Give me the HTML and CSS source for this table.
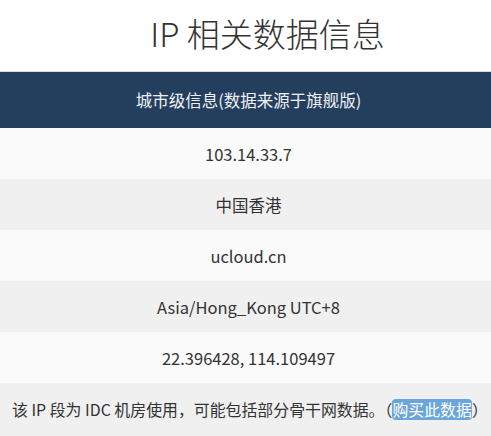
FILE: index.html
```html
<!DOCTYPE html>
<html lang="zh-CN">
<head>
<meta charset="utf-8">
<title>IP 相关数据信息</title>
<link rel="stylesheet" href="styles.css">
</head>
<body>
<div class="page">
  <h1 class="title">IP 相关数据信息</h1>
  <div class="info">
    <div class="row head">城市级信息(数据来源于旗舰版)</div>
    <div class="row odd">103.14.33.7</div>
    <div class="row even">中国香港</div>
    <div class="row odd">ucloud.cn</div>
    <div class="row even">Asia/Hong_Kong UTC+8</div>
    <div class="row odd">22.396428, 114.109497</div>
    <div class="row even note">该 IP 段为 IDC 机房使用，可能包括部分骨干网数据。（<a class="buy" href="#">购买此数据</a>）</div>
  </div>
</div>
</body>
</html>
```

FILE: styles.css
```css
html, body {
  margin: 0;
  padding: 0;
  background: #ffffff;
  overflow: hidden;
}

.page {
  width: 497px;
  font-family: "Noto Sans CJK SC", "Open Sans", sans-serif;
  color: #333333;
}

.title {
  margin: 0;
  height: 71px;
  padding-left: 38px;
  box-sizing: border-box;
  text-align: center;
  font-size: 33px;
  font-weight: 300;
  line-height: 66px;
  color: #333333;
  white-space: nowrap;
}

.info {
  border-top: 1px solid #dcdcdc;
  display: flex;
  flex-direction: column;
}

.row {
  height: 51px;
  display: flex;
  align-items: center;
  justify-content: center;
  font-size: 16.5px;
  white-space: nowrap;
}

.head {
  height: 56px;
  background: #243f5e;
  color: #eef1f4;
}

.odd {
  background: #fafafa;
}

.even {
  background: #f0f0f0;
}

.note {
  height: 53px;
  justify-content: flex-start;
  padding-left: 12px;
  font-size: 15.9px;
}

.buy {
  color: #ffffff;
  background: #6aa6dc;
  border-radius: 4px;
  text-decoration: none;
  line-height: 21px;
}
```
